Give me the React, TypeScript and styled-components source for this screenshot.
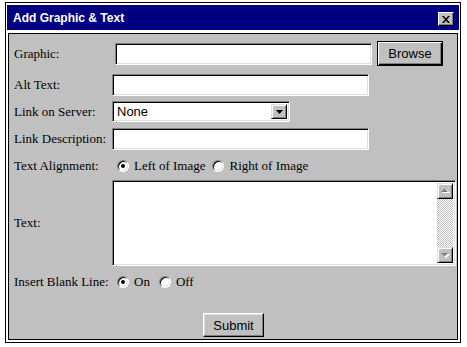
import { FC } from 'react';
import styled, { createGlobalStyle } from 'styled-components';

const GlobalStyle = createGlobalStyle`
  body {
    margin: 0;
    background: #fff;
  }
`;

const SERIF = `"Liberation Serif", "Times New Roman", serif`;
const SANS = `"Liberation Sans", Arial, sans-serif`;

// window frame
const Window = styled.div`
  box-sizing: border-box;
  margin: 2px 0 0 5px;
  width: 456px;
  height: 341px;
  border: 1px solid #000;
  padding: 2px 1px;
  display: flex;
  flex-direction: column;
`;

const TitleBar = styled.div`
  height: 25px;
  background: #000080;
  color: #fff;
  font: bold 12px ${SANS};
  display: flex;
  align-items: center;
  justify-content: space-between;
  padding: 0 5px 0 6px;
`;

const CloseButton = styled.div`
  box-sizing: border-box;
  width: 16px;
  height: 14px;
  margin-top: 3px;
  background: #c0c0c0;
  border: 1px solid;
  border-color: #fff #000 #000 #fff;
  box-shadow: inset -1px -1px #808080;
  display: flex;
  align-items: center;
  justify-content: center;
`;

const Panel = styled.div`
  box-sizing: border-box;
  margin: 3px 1px 0;
  height: 307px;
  border: 1px solid #000;
  background: #c0c0c0;
  padding: 0 4px 0 5px;
  display: flex;
  flex-direction: column;
`;

const Row = styled.div<{ $mt: number; $h: number }>`
  display: flex;
  align-items: center;
  margin-top: ${({ $mt }) => $mt}px;
  height: ${({ $h }) => $h}px;
`;

const SubmitRow = styled(Row)`
  justify-content: center;
`;

const Label = styled.div`
  width: 98px;
  flex-shrink: 0;
  font: 13px ${SERIF};
  color: #000;
  white-space: nowrap;
`;

const inset = `
  box-sizing: border-box;
  flex-shrink: 0;
  border: 1px solid;
  border-color: #808080 #fff #fff #808080;
  box-shadow: inset 1px 1px #000, inset -1px -1px #dfdfdf;
  background: #fff;
`;

const TextInput = styled.input<{ $offset?: number }>`
  ${inset}
  width: 257px;
  height: 22px;
  margin: 0 0 0 ${({ $offset = 0 }) => $offset}px;
  padding: 0 4px;
  font: 13px ${SANS};
  outline: none;
`;

const Button = styled.button<{ $isDefault?: boolean; $w: number; $h: number }>`
  box-sizing: border-box;
  flex-shrink: 0;
  width: ${({ $w }) => $w}px;
  height: ${({ $h }) => $h}px;
  padding: 0;
  background: #c0c0c0;
  color: #000;
  font: 13px ${SANS};
  border: 1px solid;
  border-color: ${({ $isDefault }) => ($isDefault ? '#000' : '#fff #000 #000 #fff')};
  box-shadow: ${({ $isDefault }) =>
    $isDefault
      ? 'inset 1px 1px #fff, inset -1px -1px #000, inset -2px -2px #808080'
      : 'inset -1px -1px #808080, inset 1px 1px #dfdfdf'};
`;

const BrowseButton = styled(Button)`
  margin-left: 5px;
`;

const SelectBox = styled.div`
  ${inset}
  width: 178px;
  height: 21px;
  display: flex;
  align-items: stretch;
  padding: 2px 2px 2px 4px;
  font: 13px ${SANS};
`;

const SelectValue = styled.div`
  flex: 1;
  display: flex;
  align-items: center;
`;

const ArrowButton = styled.div<{ $h: number }>`
  box-sizing: border-box;
  width: 16px;
  height: ${({ $h }) => $h}px;
  background: #c0c0c0;
  border: 1px solid;
  border-color: #dfdfdf #000 #000 #dfdfdf;
  box-shadow: inset 1px 1px #fff, inset -1px -1px #808080;
  display: flex;
  align-items: center;
  justify-content: center;
  flex-shrink: 0;
`;

const SelectArrow = styled(ArrowButton)`
  height: auto;
`;

const RadioGroup = styled.div`
  display: flex;
  align-items: center;
  font: 13px ${SERIF};
  padding-left: 5px;
`;

const Radio = styled.span<{ $checked?: boolean }>`
  box-sizing: border-box;
  position: relative;
  width: 12px;
  height: 12px;
  border-radius: 50%;
  background: #fff;
  border: 1px solid;
  border-color: #808080 #fff #fff #808080;
  box-shadow: inset 1px 1px #000, inset -1px -1px #dfdfdf;
  flex-shrink: 0;

  &::after {
    content: '';
    display: ${({ $checked }) => ($checked ? 'block' : 'none')};
    position: absolute;
    left: 3px;
    top: 3px;
    width: 4px;
    height: 4px;
    border-radius: 50%;
    background: #000;
  }
`;

const RadioText = styled.span<{ $gap: number }>`
  margin: 0 ${({ $gap }) => $gap}px 0 5px;
`;

const TextAreaBox = styled.div`
  ${inset}
  width: 344px;
  height: 86px;
  padding: 2px;
  display: flex;
`;

const TextAreaField = styled.textarea`
  flex: 1;
  border: none;
  outline: none;
  resize: none;
  padding: 2px 4px;
  font: 13px ${SANS};
`;

const Scrollbar = styled.div`
  width: 16px;
  display: flex;
  flex-direction: column;
  justify-content: space-between;
  background-color: #c0c0c0;
  background-image: conic-gradient(#fff 25%, #c0c0c0 0 50%, #fff 0 75%, #c0c0c0 0);
  background-size: 2px 2px;
`;

const CloseIcon = () => (
  <svg width="8" height="7" viewBox="0 0 8 7">
    <path d="M0 0h2l2 2.5L6 0h2L5 3.5 8 7H6L4 4.5 2 7H0l3-3.5z" fill="#000" />
  </svg>
);

const DropIcon = () => (
  <svg width="7" height="4" viewBox="0 0 7 4">
    <path d="M0 0h7L3.5 4z" fill="#000" />
  </svg>
);

const GreyArrow: FC<{ up?: boolean }> = ({ up }) => (
  <svg width="9" height="6" viewBox="0 0 9 6">
    {up ? (
      <>
        <path d="M1 5h8L5 1z" fill="#fff" />
        <path d="M0 4h7L3.5 0.5z" fill="#808080" />
      </>
    ) : (
      <>
        <path d="M1 2h8L5 6z" fill="#fff" />
        <path d="M0 1h7L3.5 4.5z" fill="#808080" />
      </>
    )}
  </svg>
);

const App = () => (
  <>
    <GlobalStyle />
    <Window>
      <TitleBar>
        Add Graphic &amp; Text
        <CloseButton>
          <CloseIcon />
        </CloseButton>
      </TitleBar>
      <Panel>
        <Row $mt={7} $h={25}>
          <Label>Graphic:</Label>
          <TextInput $offset={3} />
          <BrowseButton $isDefault $w={66} $h={25}>
            Browse
          </BrowseButton>
        </Row>
        <Row $mt={8} $h={22}>
          <Label>Alt Text:</Label>
          <TextInput />
        </Row>
        <Row $mt={5} $h={21}>
          <Label>Link on Server:</Label>
          <SelectBox>
            <SelectValue>None</SelectValue>
            <SelectArrow $h={0}>
              <DropIcon />
            </SelectArrow>
          </SelectBox>
        </Row>
        <Row $mt={6} $h={22}>
          <Label>Link Description:</Label>
          <TextInput />
        </Row>
        <Row $mt={7} $h={18}>
          <Label>Text Alignment:</Label>
          <RadioGroup>
            <Radio $checked />
            <RadioText $gap={7}>Left of Image</RadioText>
            <Radio />
            <RadioText $gap={0}>Right of Image</RadioText>
          </RadioGroup>
        </Row>
        <Row $mt={5} $h={86}>
          <Label>Text:</Label>
          <TextAreaBox>
            <TextAreaField />
            <Scrollbar>
              <ArrowButton $h={16}>
                <GreyArrow up />
              </ArrowButton>
              <ArrowButton $h={16}>
                <GreyArrow />
              </ArrowButton>
            </Scrollbar>
          </TextAreaBox>
        </Row>
        <Row $mt={7} $h={18}>
          <Label>Insert Blank Line:</Label>
          <RadioGroup>
            <Radio $checked />
            <RadioText $gap={9}>On</RadioText>
            <Radio />
            <RadioText $gap={0}>Off</RadioText>
          </RadioGroup>
        </Row>
        <SubmitRow $mt={22} $h={24}>
          <Button $w={61} $h={24}>
            Submit
          </Button>
        </SubmitRow>
      </Panel>
    </Window>
  </>
);

export default App;
